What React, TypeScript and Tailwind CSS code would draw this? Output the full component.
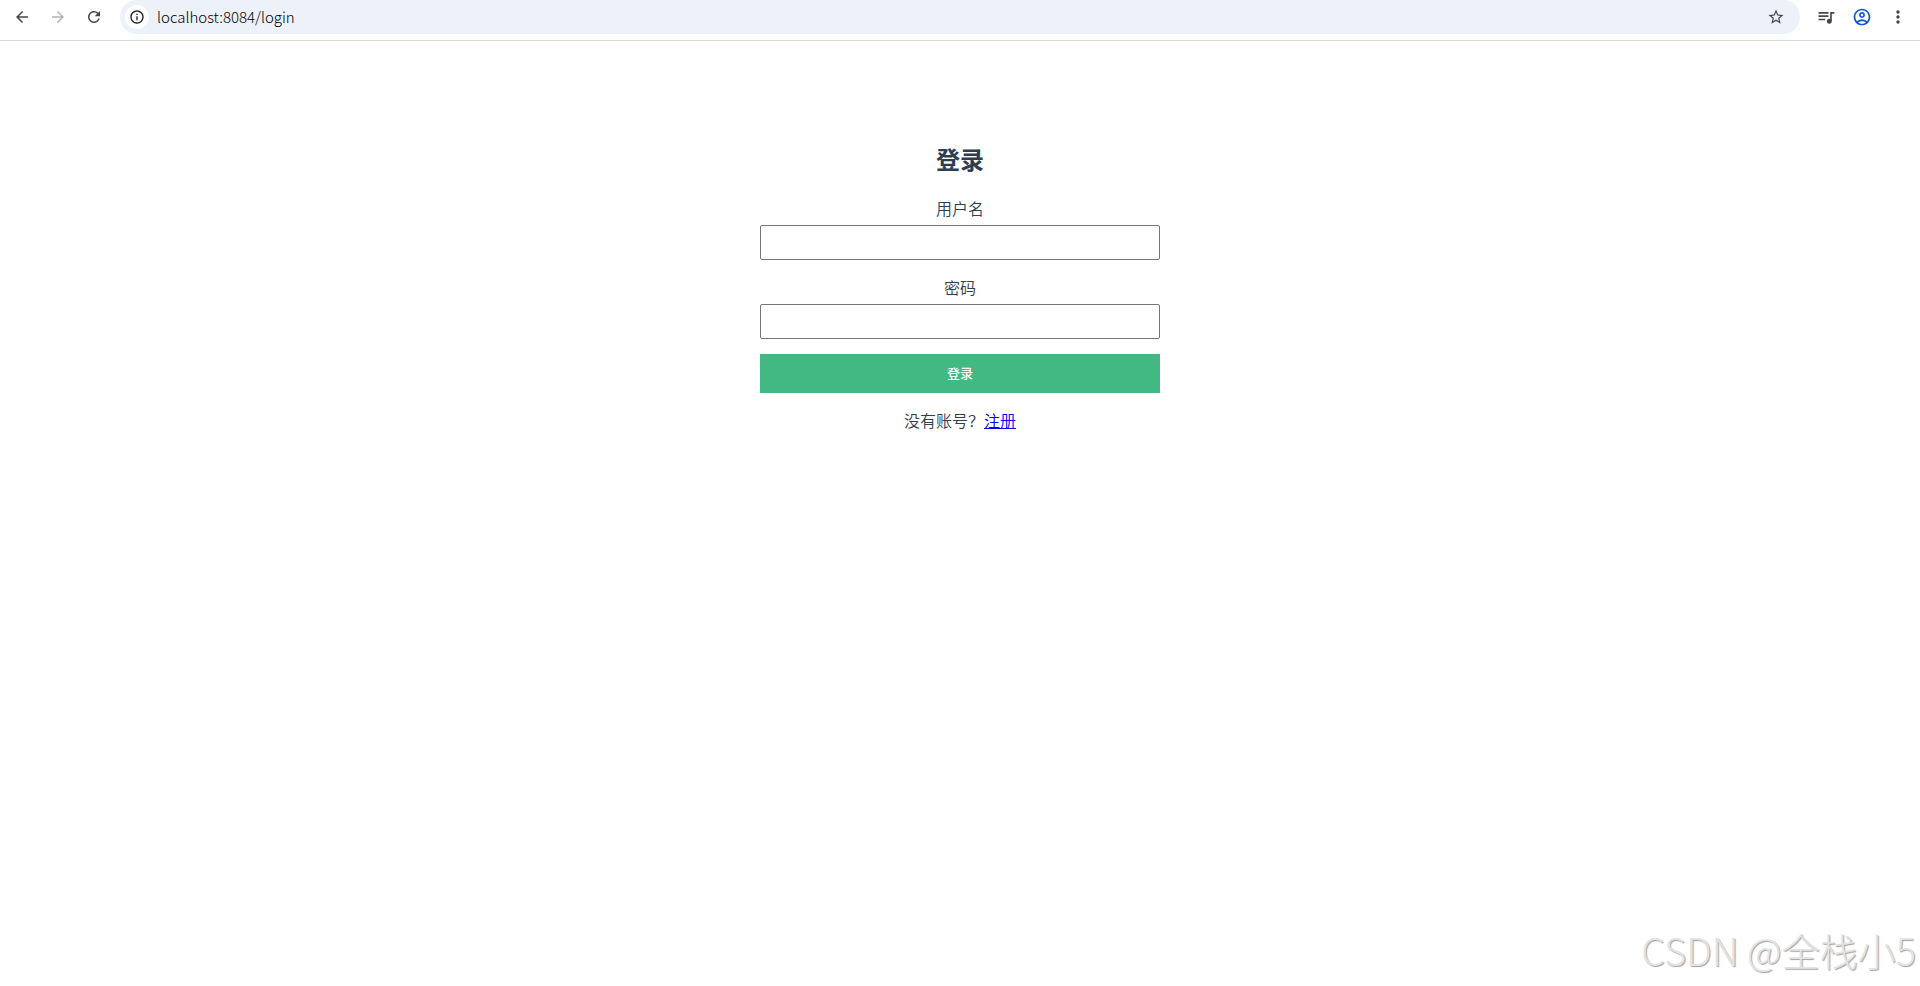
import {
  MdArrowBack,
  MdArrowForward,
  MdInfoOutline,
  MdMoreVert,
  MdOutlineAccountCircle,
  MdQueueMusic,
  MdRefresh,
  MdStarBorder,
} from "react-icons/md";

function Toolbar() {
  return (
    <header className="flex h-[41px] items-start border-b border-[#dcdcdc] bg-white pr-1 pl-1 text-[#474747]">
      <nav aria-label="Navigation" className="flex h-[34px] items-center">
        <button type="button" aria-label="Back" className="flex w-9 justify-center">
          <MdArrowBack size={18} />
        </button>
        <button type="button" aria-label="Forward" disabled className="flex w-9 justify-center text-[#b4b4b4]">
          <MdArrowForward size={18} />
        </button>
        <button type="button" aria-label="Reload" className="flex w-9 justify-center">
          <MdRefresh size={18} />
        </button>
      </nav>
      <div className="ml-2 flex h-[34px] flex-1 items-center rounded-full bg-[#ecf1fa] pr-[15px] pl-[5px]">
        <button
          type="button"
          aria-label="Site information"
          className="flex size-6 items-center justify-center rounded-full bg-white text-[#1f1f1f]"
        >
          <MdInfoOutline size={16} />
        </button>
        <input
          type="text"
          aria-label="Address"
          defaultValue="localhost:8084/login"
          className="ml-2 h-6 min-w-0 flex-1 bg-transparent font-['Noto_Sans_CJK_SC',sans-serif] text-[15px] leading-6 font-light text-black outline-none"
        />
        <button type="button" aria-label="Bookmark">
          <MdStarBorder size={18} />
        </button>
      </div>
      <div className="ml-2 flex h-[34px] items-center">
        <button type="button" aria-label="Media" className="flex w-9 justify-center">
          <MdQueueMusic size={20} />
        </button>
        <button type="button" aria-label="Profile" className="flex w-9 justify-center text-[#0b57d0]">
          <MdOutlineAccountCircle size={20} />
        </button>
        <button type="button" aria-label="Menu" className="flex w-9 justify-center">
          <MdMoreVert size={20} />
        </button>
      </div>
    </header>
  );
}

function Field({ id, label, type }: { id: string; label: string; type: string }) {
  return (
    <div className="mb-[15px]">
      <label htmlFor={id} className="mb-[5px] block leading-6">
        {label}
      </label>
      <input
        id={id}
        type={type}
        className="block h-[35px] w-full rounded-[2px] border border-[#767676] bg-white px-2 text-[13px]"
      />
    </div>
  );
}

export default function App() {
  return (
    <div className="relative flex min-h-screen flex-col bg-white font-['Noto_Sans_CJK_SC',sans-serif] text-base text-[#2c3e50]">
      <Toolbar />
      <main className="mx-auto w-full max-w-[400px] pt-[100px] text-center font-[350]">
        <h2 className="mb-[19px] text-[24px] leading-9 font-bold">登录</h2>
        <form onSubmit={(e) => e.preventDefault()}>
          <Field id="username" label="用户名" type="text" />
          <Field id="password" label="密码" type="password" />
          <button
            type="submit"
            className="block h-[39px] w-full bg-[#42b983] pb-[2px] text-[13px] font-medium text-white"
          >
            登录
          </button>
        </form>
        <p className="mt-[15px] leading-6">
          没有账号？
          <a href="#register" className="text-[#0000ee] underline">
            注册
          </a>
        </p>
      </main>
      <div className="pointer-events-none absolute right-1 bottom-2 text-[38px] leading-[56px] font-light whitespace-pre text-[#e3e3e3] [text-shadow:1px_1px_1px_#a0a0a0]">
        CSDN @全栈小5
      </div>
    </div>
  );
}
